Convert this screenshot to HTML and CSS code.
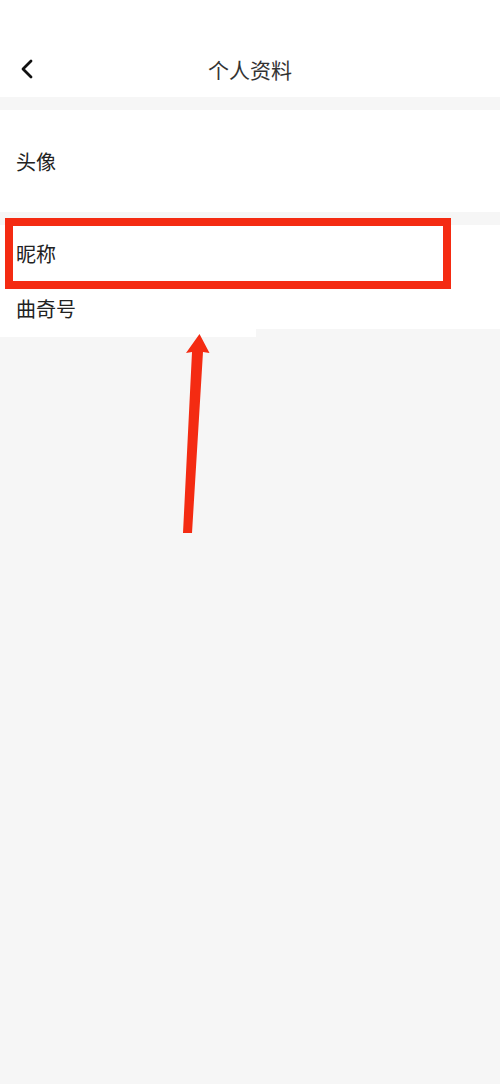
FILE: index.html
```html
<!DOCTYPE html>
<html lang="zh">
<head>
<meta charset="utf-8">
<title>个人资料</title>
<link rel="stylesheet" href="styles.css">
</head>
<body>
<div class="page">
  <header class="header">
    <div class="bar">
      <svg class="back" width="14" height="20" viewBox="0 0 14 20"><path d="M11 2 L3 10 L11 18" fill="none" stroke="#111" stroke-width="2.8" stroke-linecap="round" stroke-linejoin="round"/></svg>
      <div class="title">个人资料</div>
    </div>
  </header>
  <section class="group first">
    <div class="row tall">头像</div>
  </section>
  <section class="group second">
    <div class="row">昵称</div>
    <div class="row short">曲奇号</div>
  </section>
  <div class="patch"></div>

  <div class="highlight"></div>
  <svg class="arrow" width="500" height="1084" viewBox="0 0 500 1084"><polygon points="183,533 192,533 203,352 209.5,353 199.5,334 186,353 192,352" fill="#f42b12"/></svg>
</div>
</body>
</html>
```

FILE: styles.css
```css
html, body {
  margin: 0;
  padding: 0;
  background: #f6f6f6;
}
.page {
  position: relative;
  width: 500px;
  min-height: 1084px;
  font-family: "Noto Sans CJK SC", "Noto Sans", sans-serif;
  color: #222;
}
.header {
  background: #fff;
  height: 97px;
  padding-top: 44px;
  box-sizing: border-box;
}
.bar {
  position: relative;
  height: 50px;
  display: flex;
  align-items: center;
  justify-content: center;
}
.back {
  position: absolute;
  left: 20px;
  top: 15px;
}
.title {
  font-size: 21px;
  color: #333;
  letter-spacing: 0;
}
.group {
  background: #fff;
}
.first {
  margin-top: 13px;
}
.second {
  margin-top: 13px;
}
.row {
  height: 56px;
  display: flex;
  align-items: center;
  padding-left: 16px;
  font-size: 20px;
}
.row.tall {
  height: 102px;
}
.row.short {
  height: 48px;
  align-items: flex-end;
  padding-bottom: 6px;
  box-sizing: border-box;
}
.patch {
  width: 256px;
  height: 8px;
  background: #fff;
}
.highlight {
  position: absolute;
  left: 5px;
  top: 218px;
  width: 446px;
  height: 71px;
  box-sizing: border-box;
  border: 8px solid #f42b12;
}
.arrow {
  position: absolute;
  left: 0;
  top: 0;
}
```
